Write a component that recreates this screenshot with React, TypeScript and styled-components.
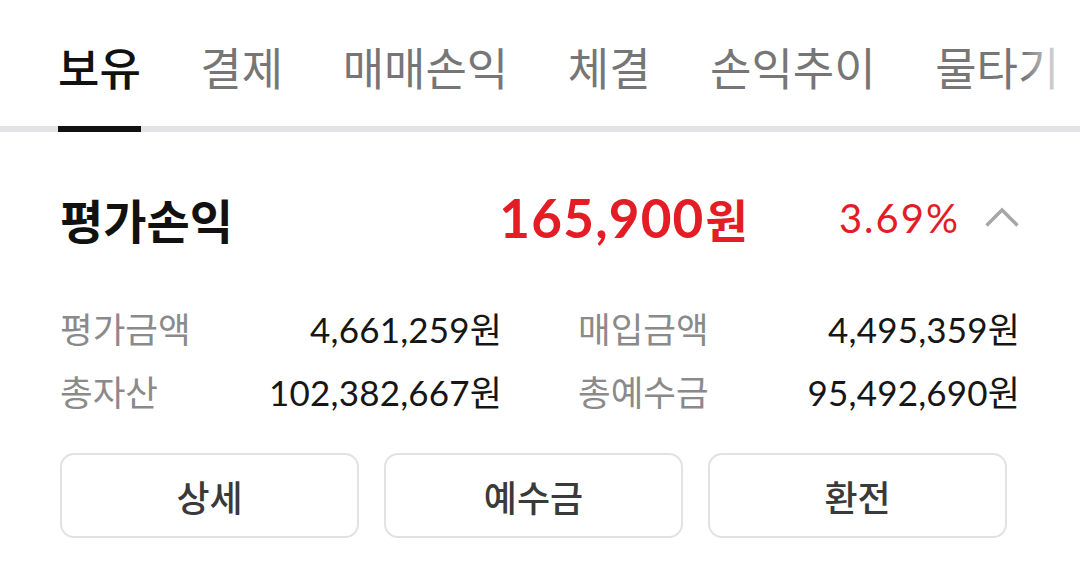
import React, { useState } from "react";
import styled, { createGlobalStyle } from "styled-components";

const GlobalStyle = createGlobalStyle`
  html, body {
    margin: 0;
    padding: 0;
    background: #ffffff;
  }
  body {
    font-family: Lato, "Noto Sans CJK KR", sans-serif;
    -webkit-font-smoothing: antialiased;
  }
`;

const TABS = ["보유", "결제", "매매손익", "체결", "손익추이", "물타기"];

const STATS = [
  { label: "평가금액", value: "4,661,259" },
  { label: "매입금액", value: "4,495,359" },
  { label: "총자산", value: "102,382,667" },
  { label: "총예수금", value: "95,492,690" },
];

const Page = styled.div`
  width: 1080px;
  background: #fff;
`;

const TabBar = styled.div`
  position: relative;
  overflow: hidden;
`;

const TabList = styled.div`
  display: flex;
  gap: 59.5px;
  padding: 0 58px;
  white-space: nowrap;
  border-bottom: 6px solid #e4e4e6;
`;

const Tab = styled.div<{ $active?: boolean }>`
  flex: none;
  padding: 38px 0 30px;
  margin-bottom: -6px;
  font-family: "Noto Sans CJK KR", sans-serif;
  font-size: 45px;
  line-height: 58px;
  font-weight: ${(p) => (p.$active ? 500 : 400)};
  color: ${(p) => (p.$active ? "#111111" : "#767676")};
  border-bottom: 6px solid ${(p) => (p.$active ? "#111111" : "transparent")};
  cursor: pointer;
`;

// 오른쪽 끝 흐려지는 효과
const Fade = styled.div`
  position: absolute;
  top: 0;
  right: 0;
  width: 56px;
  bottom: 6px;
  background: linear-gradient(to right, rgba(255, 255, 255, 0), #ffffff 80%);
  pointer-events: none;
`;

const Summary = styled.section`
  padding: 0 60px;
`;

const TitleRow = styled.div`
  display: flex;
  align-items: center;
  height: 80px;
  margin-top: 46px;
`;

const Title = styled.h2`
  flex: 1;
  margin: 0;
  font-family: "Noto Sans CJK KR", sans-serif;
  font-size: 47px;
  font-weight: 700;
  color: #111;
`;

const Amount = styled.div`
  font-family: Lato, sans-serif;
  font-size: 53px;
  font-weight: 700;
  letter-spacing: 1.2px;
  color: #e31c25;
  display: flex;
  align-items: baseline;
`;

const Won = styled.span<{ $size?: number; $gap?: number }>`
  font-family: "Noto Sans CJK KR", sans-serif;
  font-size: ${(p) => p.$size || 34}px;
  margin-left: ${(p) => p.$gap || 0}px;
  letter-spacing: 0;
`;

const Rate = styled.div`
  margin-left: 91px;
  font-family: Lato, sans-serif;
  font-size: 40px;
  letter-spacing: 2px;
  margin-right: -2px;
  color: #e31c25;
`;

const Toggle = styled.button`
  margin-left: 26px;
  width: 36px;
  height: 36px;
  padding: 0;
  border: 0;
  background: none;
  display: flex;
  align-items: center;
  justify-content: center;
  cursor: pointer;
`;

const StatGrid = styled.div`
  display: grid;
  grid-template-columns: 1fr 1fr;
  column-gap: 76px;
  margin-top: 38px;
`;

const Stat = styled.div`
  display: flex;
  justify-content: space-between;
  align-items: center;
  height: 63px;
`;

const StatLabel = styled.span`
  font-family: "Noto Sans CJK KR", sans-serif;
  font-size: 35.5px;
  color: #8a8a8a;
`;

const StatValue = styled.span`
  font-family: Lato, sans-serif;
  font-size: 35px;
  letter-spacing: 0.2px;
  color: #161616;
`;

const ButtonRow = styled.div`
  display: grid;
  grid-template-columns: repeat(3, 299px);
  gap: 25px;
  margin-top: 31px;
`;

const ActionButton = styled.button`
  height: 85px;
  border: 2px solid #e2e2e4;
  border-radius: 14px;
  background: #fff;
  font-family: "Noto Sans CJK KR", sans-serif;
  font-size: 36px;
  font-weight: 500;
  color: #3a3a3a;
  cursor: pointer;
`;

const ChevronUp = () => (
  <svg width="36" height="22" viewBox="0 0 36 22" fill="none">
    <polyline
      points="2.5,18.5 18,3 33.5,18.5"
      stroke="#a6a6a6"
      strokeWidth="3.4"
      strokeLinejoin="miter"
    />
  </svg>
);

export default function App() {
  const [active, setActive] = useState(0);
  return (
    <Page>
      <GlobalStyle />
      <TabBar>
        <TabList>
          {TABS.map((t, i) => (
            <Tab key={t} $active={i === active} onClick={() => setActive(i)}>
              {t}
            </Tab>
          ))}
        </TabList>
        <Fade />
      </TabBar>
      <Summary>
        <TitleRow>
          <Title>평가손익</Title>
          <Amount>
            165,900<Won $size={46} $gap={1}>원</Won>
          </Amount>
          <Rate>3.69%</Rate>
          <Toggle>
            <ChevronUp />
          </Toggle>
        </TitleRow>
        <StatGrid>
          {STATS.map((s) => (
            <Stat key={s.label}>
              <StatLabel>{s.label}</StatLabel>
              <StatValue>
                {s.value}
                <Won $size={35}>원</Won>
              </StatValue>
            </Stat>
          ))}
        </StatGrid>
        <ButtonRow>
          <ActionButton>상세</ActionButton>
          <ActionButton>예수금</ActionButton>
          <ActionButton>환전</ActionButton>
        </ButtonRow>
      </Summary>
    </Page>
  );
}
